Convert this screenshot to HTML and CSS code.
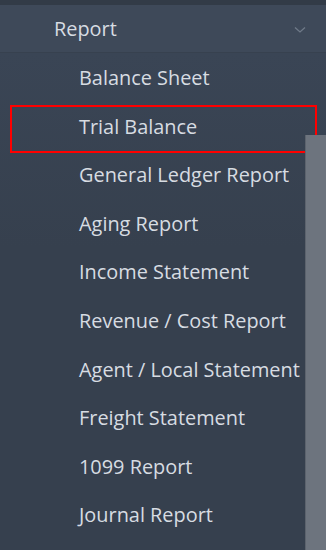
FILE: index.html
```html
<!DOCTYPE html>
<html lang="en">
<head>
  <meta charset="UTF-8">
  <meta name="viewport" content="width=device-width, initial-scale=1.0">
  <title>Report Menu</title>
  <link rel="stylesheet" href="styles.css">
</head>
<body>

  <div class="sidebar">
    <div class="top-strip"></div>

    <div class="menu-head">
      <span>Report</span>
      <svg class="chevron" width="12" height="8" viewBox="0 0 12 8">
        <path d="M1 1.5 L6 6 L11 1.5" fill="none" stroke="#6f7a88" stroke-width="1.3"/>
      </svg>
    </div>

    <ul class="submenu">
      <li>Balance Sheet</li>
      <li class="selected">Trial Balance</li>
      <li>General Ledger Report</li>
      <li>Aging Report</li>
      <li>Income Statement</li>
      <li>Revenue / Cost Report</li>
      <li>Agent / Local Statement</li>
      <li>Freight Statement</li>
      <li>1099 Report</li>
      <li>Journal Report</li>
    </ul>

    <div class="scroll-thumb"></div>
  </div>

</body>
</html>
```

FILE: styles.css
```css
html, body { margin: 0; height: 100%; }
body { font-family: "Open Sans", "DejaVu Sans", sans-serif; background-color: #36404e; color: #d7dce2; overflow: hidden; }
.sidebar { position: relative; height: 550px; }
.top-strip { height: 5px; background-color: #323b47; }
.menu-head { display: flex; align-items: center; justify-content: space-between; height: 47px; padding: 0 20px 0 54px; background-color: #3e4959; border-bottom: 1px solid #37414f; font-size: 19.9px; }
.chevron { margin-top: 2px; }
.submenu { list-style: none; margin: 0; padding: 1px 0 0; background: linear-gradient(#3a4555, #36404e 40%); }
.submenu li { position: relative; height: 48.6px; line-height: 48.6px; padding-left: 79px; font-size: 19.9px; white-space: nowrap; }
.submenu li.selected::after { content: ""; position: absolute; left: 10px; right: 9px; top: 2px; height: 44px; border: 2px solid #ff0000; }
.scroll-thumb { position: absolute; right: 0; top: 135px; bottom: 0; width: 20px; background-color: #6d747e; border-left: 1px solid #5c636d; }
```
